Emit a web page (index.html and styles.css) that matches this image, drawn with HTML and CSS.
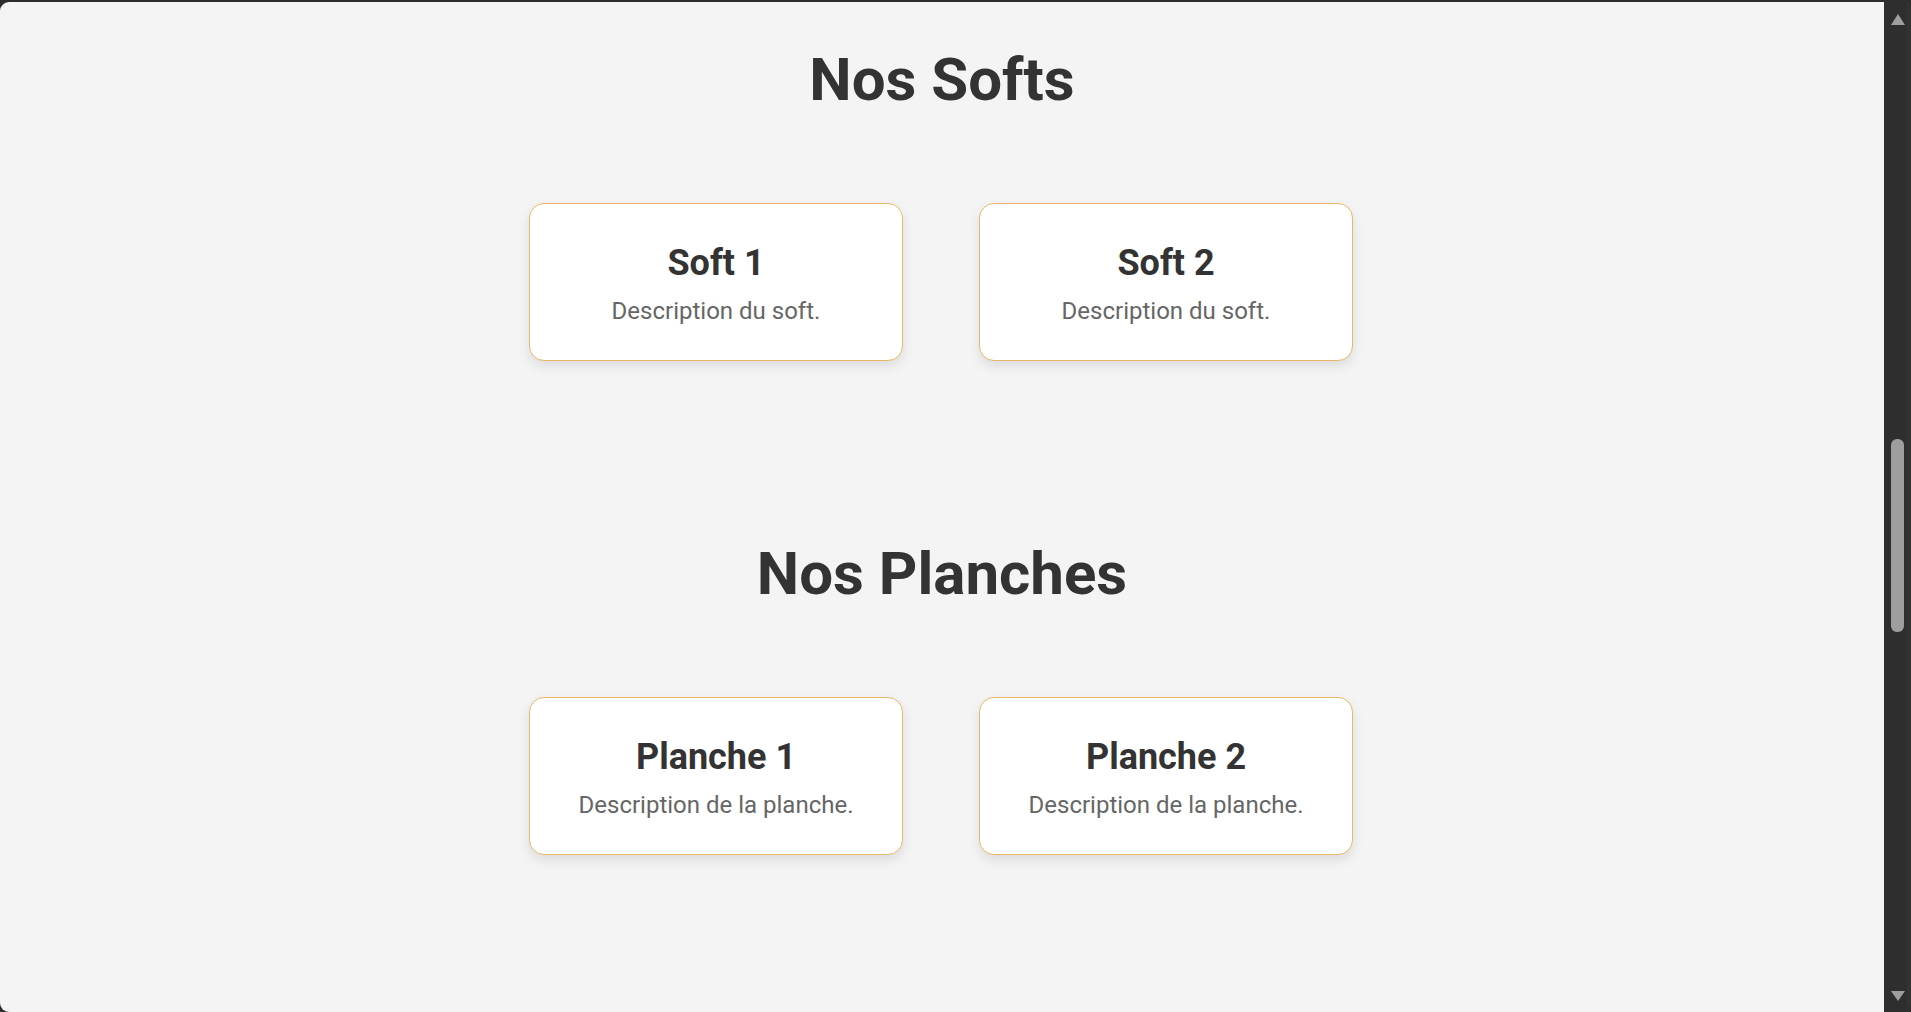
FILE: index.html
```html
<!DOCTYPE html>
<html lang="fr">
<head>
<meta charset="utf-8">
<title>Nos Softs</title>
<link rel="stylesheet" href="styles.css">
</head>
<body>
<div class="window">
  <main class="page">
    <section class="section">
      <h2 class="section-title">Nos Softs</h2>
      <div class="cards">
        <div class="card">
          <h3 class="card-title">Soft 1</h3>
          <p class="card-desc">Description du soft.</p>
        </div>
        <div class="card">
          <h3 class="card-title">Soft 2</h3>
          <p class="card-desc">Description du soft.</p>
        </div>
      </div>
    </section>
    <section class="section">
      <h2 class="section-title">Nos Planches</h2>
      <div class="cards">
        <div class="card">
          <h3 class="card-title">Planche 1</h3>
          <p class="card-desc">Description de la planche.</p>
        </div>
        <div class="card">
          <h3 class="card-title">Planche 2</h3>
          <p class="card-desc">Description de la planche.</p>
        </div>
      </div>
    </section>
  </main>
  <div class="scrollbar">
    <div class="arrow arrow-up"></div>
    <div class="track"><div class="thumb"></div></div>
    <div class="arrow arrow-down"></div>
  </div>
</div>
</body>
</html>
```

FILE: styles.css
```css
html, body {
  margin: 0;
  padding: 0;
  height: 100%;
  overflow: hidden;
}
body {
  background: #2c2c2c;
  font-family: Roboto, "Liberation Sans", Arial, sans-serif;
}
.window {
  display: flex;
  height: 1012px;
}
.page {
  flex: 1;
  margin-top: 2px;
  height: 1010px;
  background: #f4f4f4;
  border-radius: 9px 0 0 9px;
  overflow: hidden;
}
.section {
  padding: 42px 0 135px;
  text-align: center;
}
.section-title {
  margin: 0;
  font-size: 60px;
  line-height: 72px;
  font-weight: 700;
  color: #333333;
}
.cards {
  display: flex;
  justify-content: center;
  gap: 76px;
  margin-top: 87px;
  padding-right: 2px;
}
.card {
  width: 372px;
  height: 156px;
  box-sizing: content-box;
  background: #ffffff;
  border: 1px solid #e8b866;
  border-radius: 15px;
  box-shadow: 0 5px 12px rgba(0, 0, 0, 0.1);
  padding: 0;
  display: flex;
  flex-direction: column;
  align-items: center;
}
.card-title {
  margin: 38px 0 8px;
  font-size: 36px;
  line-height: 43px;
  font-weight: 700;
  color: #333333;
}
.card-desc {
  margin: 0;
  font-size: 24px;
  line-height: 36px;
  color: #666666;
}
.scrollbar {
  width: 27px;
  background: #2e2e2e;
  border-right: 4px solid #333333;
  box-sizing: border-box;
  display: flex;
  flex-direction: column;
  align-items: center;
  border-radius: 0 8px 8px 0;
}
.arrow {
  width: 0;
  height: 0;
  border-left: 7px solid transparent;
  border-right: 7px solid transparent;
  margin-left: 4px;
}
.arrow-up {
  margin-top: 14px;
  border-bottom: 11px solid #9e9e9e;
}
.arrow-down {
  margin-bottom: 11px;
  border-top: 10px solid #9e9e9e;
}
.track {
  flex: 1;
  width: 100%;
  display: flex;
  flex-direction: column;
  align-items: center;
}
.thumb {
  width: 13px;
  height: 193px;
  margin-top: 414px;
  margin-left: 4px;
  background: #9e9e9e;
  border-radius: 6px;
}
```
